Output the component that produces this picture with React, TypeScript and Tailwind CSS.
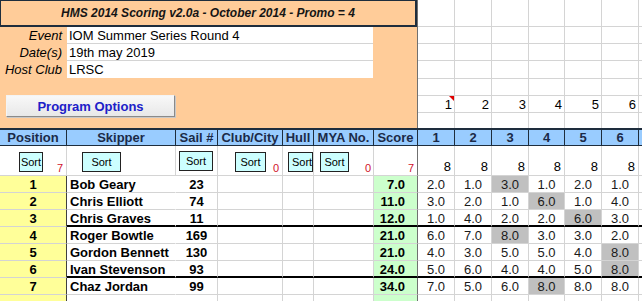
import React from "react";

type Row = { p: number; n: string; s: number; sc: string; r: string[]; d: number; thick?: boolean };

const rows: Row[] = [
  { p: 1, n: "Bob Geary", s: 23, sc: "7.0", r: ["2.0", "1.0", "3.0", "1.0", "2.0", "1.0"], d: 2 },
  { p: 2, n: "Chris Elliott", s: 74, sc: "11.0", r: ["3.0", "2.0", "1.0", "6.0", "1.0", "4.0"], d: 3 },
  { p: 3, n: "Chris Graves", s: 11, sc: "12.0", r: ["1.0", "4.0", "2.0", "2.0", "6.0", "3.0"], d: 4, thick: true },
  { p: 4, n: "Roger Bowtle", s: 169, sc: "21.0", r: ["6.0", "7.0", "8.0", "3.0", "3.0", "2.0"], d: 2 },
  { p: 5, n: "Gordon Bennett", s: 130, sc: "21.0", r: ["4.0", "3.0", "5.0", "5.0", "4.0", "8.0"], d: 5 },
  { p: 6, n: "Ivan Stevenson", s: 93, sc: "24.0", r: ["5.0", "6.0", "4.0", "4.0", "5.0", "8.0"], d: 5, thick: true },
  { p: 7, n: "Chaz Jordan", s: 99, sc: "34.0", r: ["7.0", "5.0", "6.0", "8.0", "8.0", "8.0"], d: 3 },
];

const RW = ["w-[37px]", "w-[37px]", "w-[37px]", "w-[36px]", "w-[37px]", "w-[37px]"];
const G = "border-r border-r-[#d4d4d4] border-b border-b-[#d4d4d4]";

function SortBtn({ w, clip }: { w: string; clip?: boolean }) {
  return (
    <div
      className={`${w} h-[20px] bg-[#CCFFFF] border border-[#222] text-[11px] leading-[18px] whitespace-nowrap overflow-hidden ${
        clip ? "text-left pl-[3px]" : "text-center"
      }`}
    >
      Sort
    </div>
  );
}

export default function App() {
  const topH = ["h-[27px]", "h-[17px]", "h-[17px]", "h-[18px]", "h-[17px]", "h-[17px]", "h-[15px]"];
  return (
    <div className="w-[642px] h-[301px] overflow-hidden bg-white text-black font-['Liberation_Sans',Arial,sans-serif] text-[13px] leading-[17px]">
      {/* Top section */}
      <div className="flex h-[128px]">
        <div className="w-[418px] h-full bg-[#FFCC99] border-r border-r-[#707070] flex flex-col">
          <div className="h-[27px] border-t border-l border-r-2 border-b-2 border-[#1e2d3d] flex items-center justify-center text-[12px] font-bold italic text-[#151515]">
            HMS 2014 Scoring v2.0a - October 2014 - Promo = 4
          </div>
          <div className="flex h-[17px]">
            <div className="w-[67px] text-right pr-[5px] italic">Event</div>
            <div className="w-[306px] bg-white border-b border-b-[#d4d4d4] pl-[2px]">IOM Summer Series Round 4</div>
          </div>
          <div className="flex h-[17px]">
            <div className="w-[67px] text-right pr-[5px] italic">Date(s)</div>
            <div className="w-[306px] bg-white border-b border-b-[#d4d4d4] pl-[2px]">19th may 2019</div>
          </div>
          <div className="flex h-[17px]">
            <div className="w-[67px] text-right pr-[5px] italic">Host Club</div>
            <div className="w-[306px] bg-white pl-[2px]">LRSC</div>
          </div>
          <div className="pt-[17px] pl-[6px]">
            <div className="w-[169px] h-[22px] bg-gradient-to-b from-[#f8f8f8] to-[#e8e8e8] border border-t-[#f4f4f4] border-l-[#f4f4f4] border-r-[#8a8a8a] border-b-[#8a8a8a] shadow-[1px_1px_0_#c8c8c8] flex items-center justify-center text-[13px] font-bold text-[#2020c8]">
              Program Options
            </div>
          </div>
        </div>
        <div className="flex-1 flex flex-col">
          {topH.map((h, ri) => (
            <div key={ri} className={`flex ${h}`}>
              {RW.map((w, ci) => (
                <div
                  key={ci}
                  className={`${w} h-full relative border-r border-r-[#d4d4d4] ${ri < 6 ? "border-b border-b-[#d4d4d4]" : ""} text-right pr-[2px]`}
                >
                  {ri === 5 ? String(ci + 1) : ""}
                  {ri === 5 && ci === 0 ? (
                    <div className="absolute top-0 right-0 w-0 h-0 border-l-[5px] border-l-transparent border-t-[5px] border-t-[#e00000]" />
                  ) : null}
                </div>
              ))}
              <div className={`flex-1 h-full ${ri < 6 ? "border-b border-b-[#d4d4d4]" : ""}`} />
            </div>
          ))}
        </div>
      </div>

      {/* Header row */}
      <div className="flex h-[18px] border-t-2 border-t-[#1e2d3d] font-bold text-[13px] leading-[15px] text-[#1b2a48]">
        {[
          ["w-[67px]", "Position"],
          ["w-[109px]", "Skipper"],
          ["w-[42px]", "Sail #"],
          ["w-[65px]", "Club/City"],
          ["w-[31px]", "Hull"],
          ["w-[60px]", "MYA No."],
          ["w-[44px]", "Score"],
          ["w-[37px]", "1"],
          ["w-[37px]", "2"],
          ["w-[37px]", "3"],
          ["w-[36px]", "4"],
          ["w-[37px]", "5"],
          ["w-[37px]", "6"],
        ].map(([w, t], i) => (
          <div
            key={i}
            className={`${w} h-[16px] bg-[#99CCFF] border-r border-b border-[#1e2d3d] text-center whitespace-nowrap overflow-hidden`}
          >
            {t}
          </div>
        ))}
        <div className="flex-1 h-[16px] bg-[#99CCFF] border-b border-[#1e2d3d]" />
      </div>

      {/* Sort row */}
      <div className="flex h-[30px]">
        <div className={`w-[67px] h-full ${G} flex pl-[19px] pt-[6px]`}>
          <SortBtn w="w-[24px]" />
          <div className="ml-auto self-end pr-[3px] text-[11px] leading-[13px] text-[#d0102a]">7</div>
        </div>
        <div className={`w-[109px] h-full ${G} flex pl-[15px] pt-[6px]`}>
          <SortBtn w="w-[39px]" />
        </div>
        <div className={`w-[42px] h-full ${G} flex pl-[3px] pt-[5px]`}>
          <SortBtn w="w-[34px]" />
        </div>
        <div className={`w-[65px] h-full ${G} flex pl-[17px] pt-[6px]`}>
          <SortBtn w="w-[31px]" />
          <div className="ml-auto self-end pr-[3px] text-[11px] leading-[13px] text-[#d0102a]">0</div>
        </div>
        <div className={`w-[31px] h-full ${G} flex pl-[5px] pt-[6px]`}>
          <SortBtn w="w-[25px]" clip />
        </div>
        <div className={`w-[60px] h-full ${G} flex pl-[6px] pt-[6px]`}>
          <SortBtn w="w-[29px]" />
          <div className="ml-auto self-end pr-[2px] text-[11px] leading-[13px] text-[#d0102a]">0</div>
        </div>
        <div className="w-[44px] h-full border-r border-r-[#707070] border-b border-b-[#d4d4d4] flex">
          <div className="ml-auto self-end pr-[3px] text-[11px] leading-[13px] text-[#d0102a]">7</div>
        </div>
        {RW.map((w, i) => (
          <div key={i} className={`${w} h-full ${G} flex items-end justify-end pr-[3px]`}>
            8
          </div>
        ))}
        <div className="flex-1 h-full border-b border-b-[#d4d4d4]" />
      </div>

      {/* Data rows */}
      {rows.map((r) => {
        const bb = r.thick ? "border-b-2 border-b-black" : "border-b border-b-[#d4d4d4]";
        return (
          <div key={r.p} className="flex h-[17px]">
            <div className="w-[67px] h-full bg-[#FFFF99] border-r border-r-[#404040] border-b border-b-[#d4d4d4] text-center font-bold">
              {r.p}
            </div>
            <div className={`w-[109px] h-full border-r border-r-white ${bb} pl-[3px] font-bold whitespace-nowrap overflow-hidden`}>
              {r.n}
            </div>
            <div className={`w-[42px] h-full border-r border-r-[#d4d4d4] ${bb} text-center font-bold`}>{r.s}</div>
            <div className={`w-[65px] h-full border-r border-r-[#d4d4d4] ${bb}`} />
            <div className={`w-[31px] h-full border-r border-r-[#d4d4d4] ${bb}`} />
            <div className={`w-[60px] h-full border-r border-r-[#d4d4d4] ${bb}`} />
            <div className={`w-[44px] h-full bg-[#CCFFCC] border-r border-r-[#707070] ${bb} text-right pr-[12px] font-bold`}>
              {r.sc}
            </div>
            {r.r.map((v, i) => (
              <div
                key={i}
                className={`${RW[i]} h-full border-r border-r-[#d4d4d4] ${bb} text-center text-[#1a1a1a] ${
                  i === r.d ? "bg-[#C0C0C0]" : ""
                }`}
              >
                {v}
              </div>
            ))}
            <div className={`flex-1 h-full ${bb}`} />
          </div>
        );
      })}
      <div className="flex h-[17px]">
        <div className="w-[67px] h-full bg-[#FFFF99] border-r border-r-[#404040]" />
        <div className="w-[109px] h-full border-r border-r-white" />
        <div className="w-[42px] h-full border-r border-r-[#d4d4d4]" />
        <div className="w-[65px] h-full border-r border-r-[#d4d4d4]" />
        <div className="w-[31px] h-full border-r border-r-[#d4d4d4]" />
        <div className="w-[60px] h-full border-r border-r-[#d4d4d4]" />
        <div className="w-[44px] h-full bg-[#CCFFCC] border-r border-r-[#707070]" />
        {RW.map((w, i) => (
          <div key={i} className={`${w} h-full border-r border-r-[#d4d4d4]`} />
        ))}
      </div>
    </div>
  );
}
